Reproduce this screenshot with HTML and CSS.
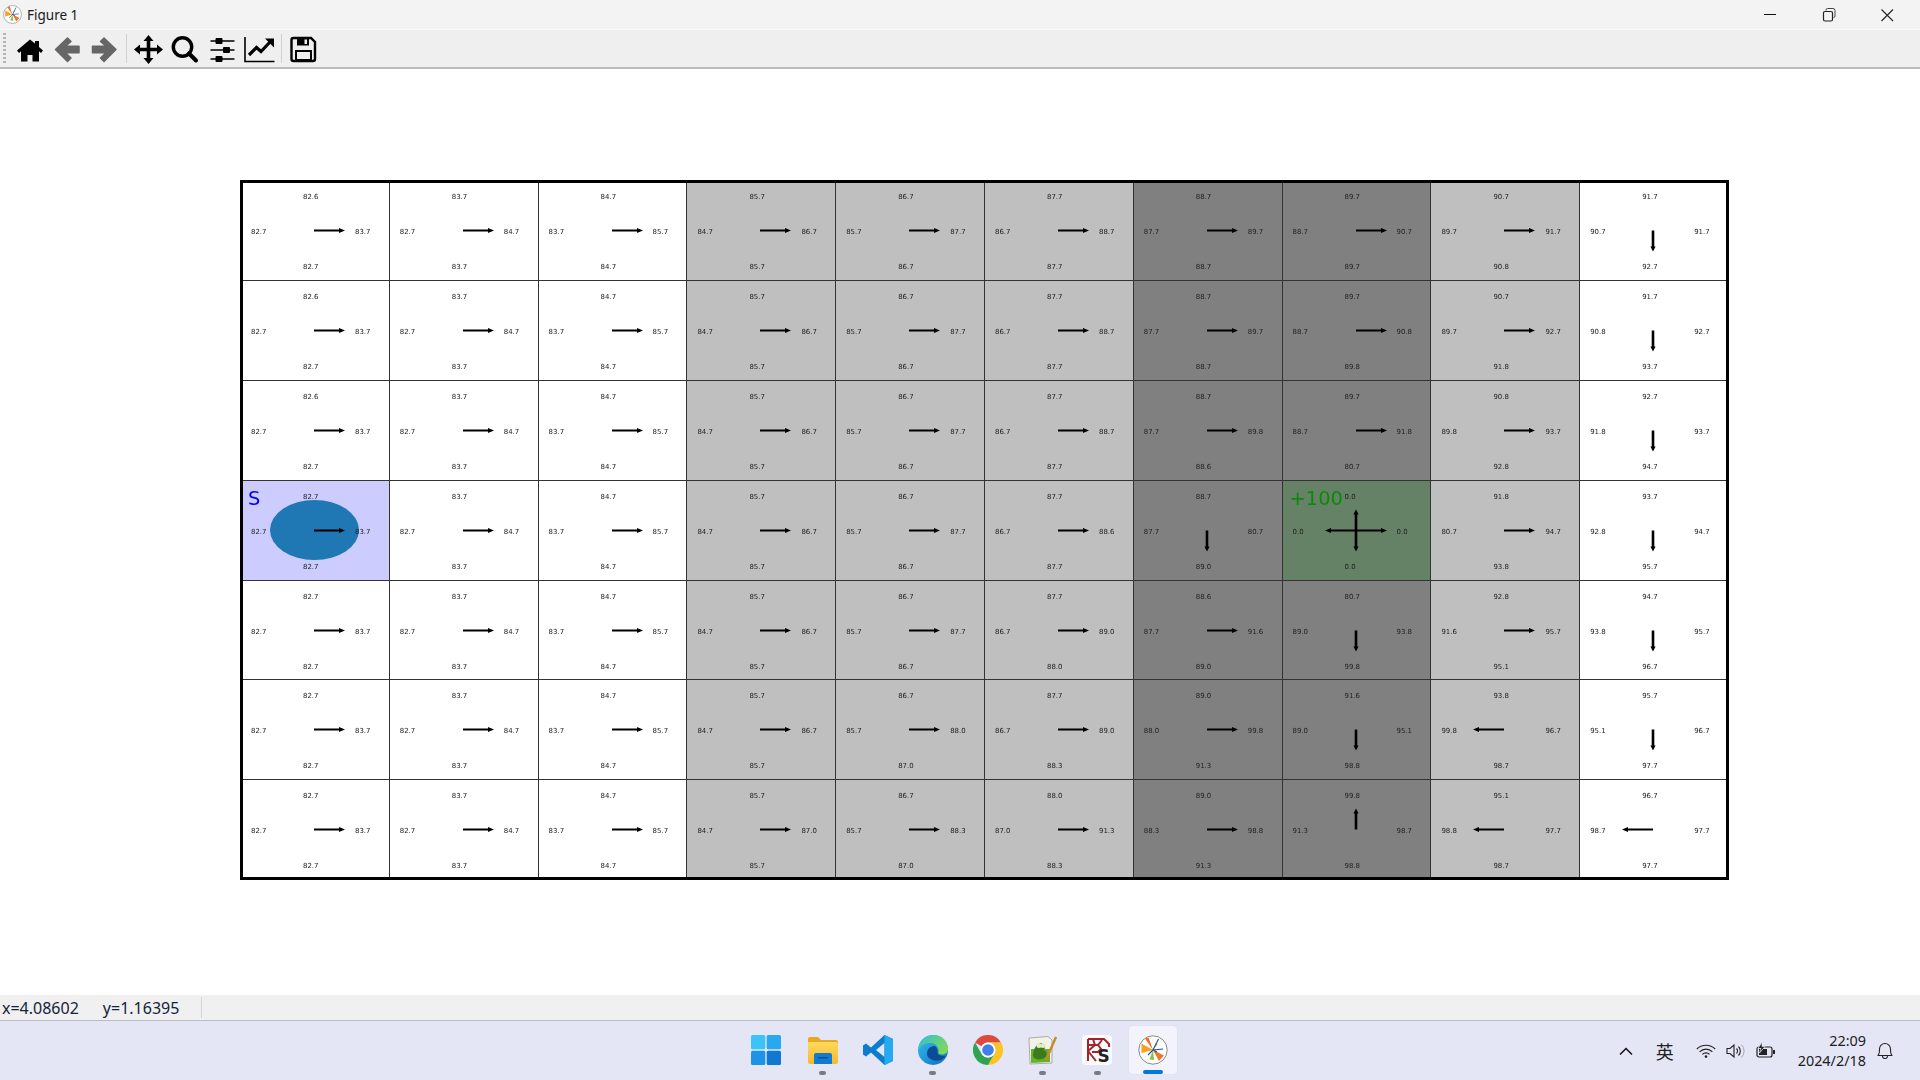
FILE: index.html
```html
<!DOCTYPE html>
<html lang="zh">
<head>
<meta charset="utf-8">
<title>Figure 1</title>
<link rel="stylesheet" href="styles.css">
</head>
<body>
<svg class="defs" width="0" height="0" aria-hidden="true">
  <defs>
    <symbol id="mpl" viewBox="0 0 30 30">
      <circle cx="15" cy="15" r="14.2" fill="#fff" stroke="#8a8a8a" stroke-width="1"/>
      <path d="M15 15L3.5 8.5 3.5 18Z" fill="#f9a11b"/>
      <path d="M15 15L7 3.5 10.5 2.5Z" fill="#f2692a"/>
      <path d="M15 15L26 20.5 21 26Z" fill="#f0762a"/>
      <path d="M15 15L11.5 24.5 16 25Z" fill="#84c341"/>
      <path d="M15 15L18 8 19.5 9Z" fill="#8cc63f"/>
      <path d="M15 15L20.5 4M15 15L25 14M15 15L10 20M15 15L19 17" stroke="#1f4e9c" stroke-width="1.1" fill="none"/>
    </symbol>
    <linearGradient id="edgeA" x1="0" y1="0" x2="1" y2="1">
      <stop offset="0" stop-color="#35c1f1"/><stop offset="1" stop-color="#0f6cbd"/>
    </linearGradient>
    <linearGradient id="edgeB" x1="0" y1="0" x2="1" y2="0.6">
      <stop offset="0" stop-color="#2fbfd8"/><stop offset="1" stop-color="#7fd858"/>
    </linearGradient>
    <linearGradient id="folderG" x1="0" y1="0" x2="0" y2="1">
      <stop offset="0" stop-color="#ffd95e"/><stop offset="1" stop-color="#f5b92c"/>
    </linearGradient>
  </defs>
</svg>

<header class="titlebar">
  <svg class="title-icon" width="19" height="19"><use href="#mpl"/></svg>
  <span class="title-text">Figure 1</span>
  <div class="winctl">
    <svg width="60" height="28" viewBox="0 0 60 28"><path d="M24 13.5H36" stroke="#111" stroke-width="1"/></svg>
    <svg width="58" height="28" viewBox="0 0 58 28"><rect x="23.5" y="10.5" width="9" height="9.5" rx="1.5" fill="none" stroke="#222" stroke-width="1.2"/><path d="M26 9.5V9a1.5 1.5 0 0 1 1.5-1.5H33a2 2 0 0 1 2 2V15a1.5 1.5 0 0 1-1.5 1.5" fill="none" stroke="#444" stroke-width="1"/></svg>
    <svg width="60" height="28" viewBox="0 0 60 28"><path d="M23.5 8.5L35 20M35 8.5L23.5 20" stroke="#222" stroke-width="1.1"/></svg>
  </div>
</header>

<nav class="toolbar">
  <span class="grip"></span>
  <svg class="tool" viewBox="0 0 37 38"><path d="M18 9.5L5 20.5 7 23 9 21.3V31.5H15.5V25H20.5V31.5H27V21.3L29 23 31 20.5 27 17V11H23V13.6Z" fill="#000"/></svg>
  <svg class="tool" viewBox="0 0 37 38"><path d="M18.5 8L6.5 19.5 18.5 31.5 22 28 16.5 22.7H30V16.3H16.5L22 11.5Z" fill="#666" stroke="#666" stroke-linejoin="round" stroke-width="1.5"/></svg>
  <svg class="tool" viewBox="0 0 37 38"><path d="M18 8L30 19.5 18 31.5 14.5 28 20 22.7H6.5V16.3H20L14.5 11.5Z" fill="#666" stroke="#666" stroke-linejoin="round" stroke-width="1.5"/></svg>
  <span class="sep"></span>
  <svg class="tool" viewBox="0 0 37 38"><path d="M18.5 5L23.5 11H20.3V17.7H27V14.5L33 19.5 27 24.5V21.3H20.3V28H23.5L18.5 34 13.5 28H16.7V21.3H10V24.5L4 19.5 10 14.5V17.7H16.7V11H13.5Z" fill="#000"/></svg>
  <svg class="tool" viewBox="0 0 37 38"><circle cx="15.5" cy="17" r="9.2" fill="none" stroke="#000" stroke-width="3.4"/><path d="M22 23.5L29 30.5" stroke="#000" stroke-width="4" stroke-linecap="round"/></svg>
  <svg class="tool" viewBox="0 0 37 38"><path d="M6.5 11H30.5M6.5 20H30.5M6.5 29H30.5" stroke="#000" stroke-width="1.6"/><rect x="11.5" y="8" width="7" height="6" rx="1" fill="#000"/><rect x="19" y="17" width="7" height="6" rx="1" fill="#000"/><rect x="11.5" y="26" width="7" height="6" rx="1" fill="#000"/></svg>
  <svg class="tool" viewBox="0 0 37 38"><path d="M4 7V31.5H33.5" fill="none" stroke="#000" stroke-width="1.6"/><path d="M8 25L15.5 17.5 20 21.5 29 12" fill="none" stroke="#000" stroke-width="3.2"/><path d="M24 8.5H33V17.5Z" fill="#000"/></svg>
  <span class="sep"></span>
  <svg class="tool" viewBox="0 0 37 38"><path d="M8.5 8H26L30 12V29A2 2 0 0 1 28 31H8.5A2 2 0 0 1 6.5 29V10A2 2 0 0 1 8.5 8Z" fill="none" stroke="#000" stroke-width="2.4"/><rect x="12" y="8" width="12" height="7.5" fill="#000"/><rect x="19.5" y="9.5" width="2.5" height="4.5" fill="#efefef"/><rect x="11" y="21" width="15" height="9" fill="none" stroke="#000" stroke-width="2"/></svg>
</nav>

<main class="canvas">
  <div class="plot">
    <div class="grid" id="grid"></div>
    <div class="frame"></div>
  </div>
</main>

<div class="statusbar">
  <span class="coords">x=4.08602</span>
  <span class="coords coords-y">y=1.16395</span>
  <span class="status-sep"></span>
</div>

<footer class="taskbar">
  <div class="apps">
    <div class="app app-first">
      <svg width="30" height="30" viewBox="0 0 30 30"><rect x="0" y="0" width="14.3" height="14.3" rx="1.5" fill="#3cc4f8"/><rect x="15.7" y="0" width="14.3" height="14.3" rx="1.5" fill="#2aa8ef"/><rect x="0" y="15.7" width="14.3" height="14.3" rx="1.5" fill="#1b93e6"/><rect x="15.7" y="15.7" width="14.3" height="14.3" rx="1.5" fill="#0e78d2"/></svg>
    </div>
    <div class="app">
      <svg width="30" height="30" viewBox="0 0 30 30"><path d="M0 4a2 2 0 0 1 2-2H10L13 5H28a2 2 0 0 1 2 2V10H0Z" fill="#e8a820"/><path d="M0 7H28a2 2 0 0 1 2 2V27a2 2 0 0 1-2 2H2a2 2 0 0 1-2-2Z" fill="url(#folderG)"/><path d="M6 29V20a2 2 0 0 1 2-2H22a2 2 0 0 1 2 2V29Z" fill="#0f7ccf"/><rect x="10" y="22" width="10" height="1.5" fill="#0a4f8f"/></svg>
      <i class="dot"></i>
    </div>
    <div class="app">
      <svg width="30" height="30" viewBox="0 0 30 30"><path d="M21.5 0L30 4V26L21.5 30 8 17.5 3 21.5 0 19.5V10.5L3 8.5 8 12.5ZM21.5 8L13 15 21.5 22Z" fill="#0c7ccc" fill-rule="evenodd"/><path d="M21.5 0L30 4V26L21.5 30Z" fill="#25a9f0"/></svg>
    </div>
    <div class="app">
      <svg width="30" height="30" viewBox="0 0 30 30"><circle cx="15" cy="15" r="15" fill="url(#edgeA)"/><path d="M.3 13C2 5 8 0 15.5 0 24 0 30 6 30 14 30 18 27 19.5 23.5 19.5 21 19.5 20 18.5 20.5 17 21.5 13 18 8 12 8 7 8 3 10 .3 15Z" fill="url(#edgeB)"/><path d="M9 19C9 13 13 11 17 11 19 13 20 15 19.5 17 19.5 20 22 21 27.5 21 24 26 18 26.5 14.5 25 11 23.5 9 21.5 9 19Z" fill="#0a4d96"/></svg>
      <i class="dot"></i>
    </div>
    <div class="app">
      <svg width="30" height="30" viewBox="0 0 30 30"><path d="M2 7.5A15 15 0 0 1 28 7.5H15A7.5 7.5 0 0 0 8.5 11.2Z" fill="#dd4a3d"/><path d="M28 7.5A15 15 0 0 1 15 30L21.5 18.7A7.5 7.5 0 0 0 21.5 11.2 7.5 7.5 0 0 0 15 7.5Z" fill="#fbc422"/><path d="M15 30A15 15 0 0 1 2 7.5L8.5 18.7A7.5 7.5 0 0 0 15 22.5 7.5 7.5 0 0 0 21.5 18.7Z" fill="#2fa351"/><circle cx="15" cy="15" r="7.4" fill="#fff"/><circle cx="15" cy="15" r="5.8" fill="#3f7fe9"/></svg>
    </div>
    <div class="app">
      <svg width="30" height="30" viewBox="0 0 30 30"><path d="M1 3L20 1.5 24 5V28L2 29Z" fill="#f2f2ea" stroke="#9a9a90" stroke-width=".8"/><path d="M3 14H22V27L3 28Z" fill="#63b22a"/><path d="M5 21C5 14 9 8 13 8 17 8 18 12 16 15 20 16 20 23 14 24 10 25 6 24 5 21Z" fill="#3c7a1e"/><circle cx="11" cy="10.5" r="2.5" fill="#dfeec0"/><circle cx="15" cy="10.5" r="2.5" fill="#dfeec0"/><path d="M18 25L28 2" stroke="#c98a2c" stroke-width="2.4"/></svg>
      <i class="dot"></i>
    </div>
    <div class="app app-ks">
      <svg width="30" height="30" viewBox="0 0 30 30"><rect width="30" height="30" rx="4" fill="#fbfbfd"/><path d="M6 4H22L27 9V12M6 4V26M6 10H16L20 5M6 16L13 10M6 16L14 26M11 4L13 10M16 10L19 14 16 17H10" fill="none" stroke="#a2232a" stroke-width="2"/><text x="15.5" y="27" class="ks-letter">S</text></svg>
      <i class="dot"></i>
    </div>
    <div class="app app-active">
      <svg width="30" height="30"><use href="#mpl"/></svg>
      <i class="bar"></i>
    </div>
  </div>

  <div class="tray">
    <svg class="tray-chevron" width="14" height="8" viewBox="0 0 14 8"><path d="M1 7.5L7 1.5 13 7.5" fill="none" stroke="#111" stroke-width="1.5"/></svg>
    <span class="ime">英</span>
    <svg class="tray-wifi" width="20" height="14" viewBox="0 0 20 14"><path d="M.8 5A13 13 0 0 1 19.2 5M3.6 7.8A9 9 0 0 1 16.4 7.8M6.4 10.4A5 5 0 0 1 13.6 10.4" fill="none" stroke="#222" stroke-width="1.1"/><circle cx="10" cy="12.6" r="1.3" fill="#222"/></svg>
    <svg class="tray-vol" width="20" height="16" viewBox="0 0 20 16"><path d="M1 5.5H4L8 2V14L4 10.5H1Z" fill="none" stroke="#222" stroke-width="1.1"/><path d="M10.5 5.5A3.5 3.5 0 0 1 10.5 10.5M12.5 3.5A6.5 6.5 0 0 1 12.5 12.5" fill="none" stroke="#222" stroke-width="1.1"/><path d="M15.5 1.5A9.5 9.5 0 0 1 15.5 14.5" fill="none" stroke="#aaa" stroke-width="1"/></svg>
    <svg class="tray-bat" width="20" height="17" viewBox="0 0 20 17"><rect x="1" y="5" width="15" height="10" rx="2" fill="none" stroke="#222" stroke-width="1.2"/><rect x="3" y="7" width="8" height="6" fill="#222"/><rect x="17" y="8" width="2" height="4" fill="#222"/><path d="M6 0L2 6.5H5L3.5 11 9 4.5H6Z" fill="#222" stroke="#e4e6f6" stroke-width=".7"/></svg>
    <div class="clock"><span>22:09</span><span>2024/2/18</span></div>
    <svg class="tray-bell" width="16" height="18" viewBox="0 0 16 18"><path d="M1 13.5C2.5 12 2.5 10.5 2.5 7A5.5 5.5 0 0 1 13.5 7C13.5 10.5 13.5 12 15 13.5Z" fill="none" stroke="#222" stroke-width="1.1" stroke-linejoin="round"/><path d="M5.5 14A2.5 2.5 0 0 0 10.5 14" fill="none" stroke="#222" stroke-width="1.1"/></svg>
  </div>
</footer>
<script src="script.js"></script>
</body>
</html>
```

FILE: styles.css
```css
* { box-sizing: border-box; }
html, body { margin: 0; height: 100%; }
body {
  width: 1920px; height: 1080px; overflow: hidden;
  display: flex; flex-direction: column;
  font-family: "Noto Sans", "Noto Sans CJK SC", sans-serif;
  background: #fff; color: #111;
}
.defs { position: absolute; }

.titlebar {
  height: 30px; flex: none; display: flex; align-items: center;
  background: #f3f3f3; border-bottom: 1px solid #fbfbfb;
  padding-left: 3px;
}
.title-icon { margin-right: 5px; }
.title-text { font-size: 13.5px; color: #1a1a1a; }
.winctl { margin-left: auto; margin-right: 2px; display: flex; }
.winctl svg { display: block; }

.toolbar {
  height: 39px; flex: none; display: flex; align-items: center;
  background: #efefef; border-bottom: 2px solid #bcbcbc;
  padding-left: 11.5px; position: relative;
}
.grip {
  position: absolute; left: 3px; top: 3px; height: 31px; width: 3px;
  background: repeating-linear-gradient(#b5b5b5 0 2px, transparent 2px 4px);
}
.tool { width: 37px; height: 38px; flex: none; display: block; }
.sep { width: 1px; height: 29px; margin: 0 3px; background: #cfcfcf; flex: none; }

.canvas { flex: 1; background: #fff; padding: 112px 0 0 241px; min-height: 0; }
.plot { position: relative; width: 1486px; height: 697px; }
.grid {
  display: grid;
  grid-template-columns: repeat(9, 148.8px) 147.6px;
  grid-template-rows: 100px 100px 100px 100px 99px 100px 98.5px;
  will-change: transform;
}
.frame {
  position: absolute; left: -1.5px; top: -1.5px; width: 1489px; height: 700px;
  border: 3px solid #000;
  pointer-events: none;
}
.cell {
  position: relative;
  display: grid;
  padding-left: 10px;
  grid-template-columns: 52px 52px auto;
  grid-template-rows: 32px 38px 32px;
  align-content: start;
  justify-items: start; align-items: center;
  border-right: 1px solid #333; border-bottom: 1px solid #333;
  font: 6.94px/1 "DejaVu Sans", sans-serif;
  color: #222;
}
.light { background: #bfbfbf; }
.dark { background: #808080; }
.start { background: #ccccff; }
.goal { background: #668266; }
.lab { position: relative; }
.lab-t { grid-column: 2; grid-row: 1; }
.lab-l { grid-column: 1; grid-row: 2; }
.lab-r { grid-column: 3; grid-row: 2; }
.lab-b { grid-column: 2; grid-row: 3; }
.arrows { position: absolute; left: 0; top: 0; width: 148px; height: 99px; overflow: visible; }
.agent {
  position: absolute; left: 29px; top: 19px; width: 89px; height: 60px;
  border-radius: 50%; background: #1f77b4;
}
.mark { position: absolute; left: 7px; top: 7px; font-size: 19.4px; line-height: 22px; }
.mark-s { color: #0000ff; }
.mark-g { color: #0a8a0a; left: 7px; }

.statusbar {
  height: 25px; flex: none; display: flex; align-items: center;
  background: #f0f0f0; padding-left: 2px;
}
.coords { font-size: 16px; color: #14233a; }
.coords-y { margin-left: 24px; }
.status-sep { width: 1px; height: 21px; background: #d4d4d4; margin-left: 22px; }

.taskbar {
  height: 60px; flex: none; position: relative;
  display: flex; justify-content: center; align-items: center;
  background: #e4e6f6; border-top: 1px solid #b9bcc8;
}
.apps { display: flex; gap: 7px; margin-left: -1px; margin-top: -1px; }
.app {
  width: 48px; height: 48px; position: relative; flex: none;
  display: flex; align-items: center; justify-content: center;
  border-radius: 4px;
}
.app-first { margin-right: 1.5px; }
.app svg { display: block; }
.app-ks svg { margin-left: -2px; }
.app-active { background: #f3f4fb; box-shadow: 0 0 1px #c8cadc; }
.dot {
  position: absolute; left: 20.5px; bottom: -1px; width: 7px; height: 4px;
  border-radius: 2px; background: #7a7a82;
}
.bar {
  position: absolute; left: 14px; bottom: 0; width: 20px; height: 4px;
  border-radius: 2px; background: #0078d4;
}
.ks-letter { font: 700 17px "DejaVu Sans", sans-serif; fill: #222; }

.tray {
  position: absolute; right: 27px; top: 0; height: 59px;
  display: flex; align-items: center;
}
.tray-chevron { margin-right: 23px; }
.ime { font: 18px/1 "Noto Sans CJK SC", sans-serif; color: #222; margin-right: 22px; }
.tray-wifi { margin-right: 10px; }
.tray-vol { margin-right: 10px; }
.tray-bat { margin-right: 22px; }
.clock {
  display: flex; flex-direction: column; align-items: flex-end;
  font-size: 14.4px; line-height: 20px; color: #1c1c1c; margin-right: 11px;
}
```

FILE: script.js
```js
// Q-values of the grid world: top, left, right, bottom, and the greedy action.
var base = [
  "82.7 82.7 83.7 82.7 e", "83.7 82.7 84.7 83.7 e", "84.7 83.7 85.7 84.7 e",
  "85.7 84.7 86.7 85.7 e", "86.7 85.7 87.7 86.7 e", "87.7 86.7 88.7 87.7 e",
  "88.7 87.7 89.7 88.7 e"
];
var over = {
  "0,0": "82.6 82.7 83.7 82.7 e", "0,7": "89.7 88.7 90.7 89.7 e", "0,8": "90.7 89.7 91.7 90.8 e", "0,9": "91.7 90.7 91.7 92.7 s",
  "1,0": "82.6 82.7 83.7 82.7 e", "1,7": "89.7 88.7 90.8 89.8 e", "1,8": "90.7 89.7 92.7 91.8 e", "1,9": "91.7 90.8 92.7 93.7 s",
  "2,0": "82.6 82.7 83.7 82.7 e", "2,6": "88.7 87.7 89.8 88.6 e", "2,7": "89.7 88.7 91.8 80.7 e", "2,8": "90.8 89.8 93.7 92.8 e", "2,9": "92.7 91.8 93.7 94.7 s",
  "3,5": "87.7 86.7 88.6 87.7 e", "3,6": "88.7 87.7 80.7 89.0 s", "3,7": "0.0 0.0 0.0 0.0 nesw", "3,8": "91.8 80.7 94.7 93.8 e", "3,9": "93.7 92.8 94.7 95.7 s",
  "4,5": "87.7 86.7 89.0 88.0 e", "4,6": "88.6 87.7 91.6 89.0 e", "4,7": "80.7 89.0 93.8 99.8 s", "4,8": "92.8 91.6 95.7 95.1 e", "4,9": "94.7 93.8 95.7 96.7 s",
  "5,4": "86.7 85.7 88.0 87.0 e", "5,5": "87.7 86.7 89.0 88.3 e", "5,6": "89.0 88.0 99.8 91.3 e", "5,7": "91.6 89.0 95.1 98.8 s", "5,8": "93.8 99.8 96.7 98.7 w", "5,9": "95.7 95.1 96.7 97.7 s",
  "6,3": "85.7 84.7 87.0 85.7 e", "6,4": "86.7 85.7 88.3 87.0 e", "6,5": "88.0 87.0 91.3 88.3 e", "6,6": "89.0 88.3 98.8 91.3 e", "6,7": "99.8 91.3 98.7 98.8 n", "6,8": "95.1 98.8 97.7 98.7 w", "6,9": "96.7 98.7 97.7 97.7 w"
};
var ARROW = {
  e: "M0 -1H25V-2.6L31 0 25 2.6V1H0Z",
  w: "M0 -1H-25V-2.6L-31 0 -25 2.6V1H0Z",
  s: "M-1.3 0V16H-2.6L0 21 2.6 16H1.3V0Z",
  n: "M-1.3 0V-16H-2.6L0 -21 2.6 -16H1.3V0Z"
};
var shade = function (c) {
  if (c === 6 || c === 7) return "dark";
  if ((c >= 3 && c <= 5) || c === 8) return "light";
  return "";
};
var html = "";
for (var r = 0; r < 7; r++) {
  for (var c = 0; c < 10; c++) {
    var v = (over[r + "," + c] || base[c]).split(" ");
    var cls = shade(c);
    var extra = "";
    if (r === 3 && c === 0) { cls = "start"; extra = '<div class="agent"></div><span class="mark mark-s">S</span>'; }
    if (r === 3 && c === 7) { cls = "goal"; extra = '<span class="mark mark-g">+100</span>'; }
    var paths = v[4].split("").map(function (a) { return '<path d="' + ARROW[a] + '" fill="#000"/>'; }).join("");
    html += '<div class="cell ' + cls + '">' + extra +
      '<span class="lab lab-t">' + v[0] + '</span>' +
      '<span class="lab lab-l">' + v[1] + '</span>' +
      '<span class="lab lab-r">' + v[2] + '</span>' +
      '<span class="lab lab-b">' + v[3] + '</span>' +
      '<svg class="arrows" viewBox="0 0 148 99"><g transform="translate(73 49.5)">' + paths + '</g></svg></div>';
  }
}
document.getElementById("grid").innerHTML = html;
```
